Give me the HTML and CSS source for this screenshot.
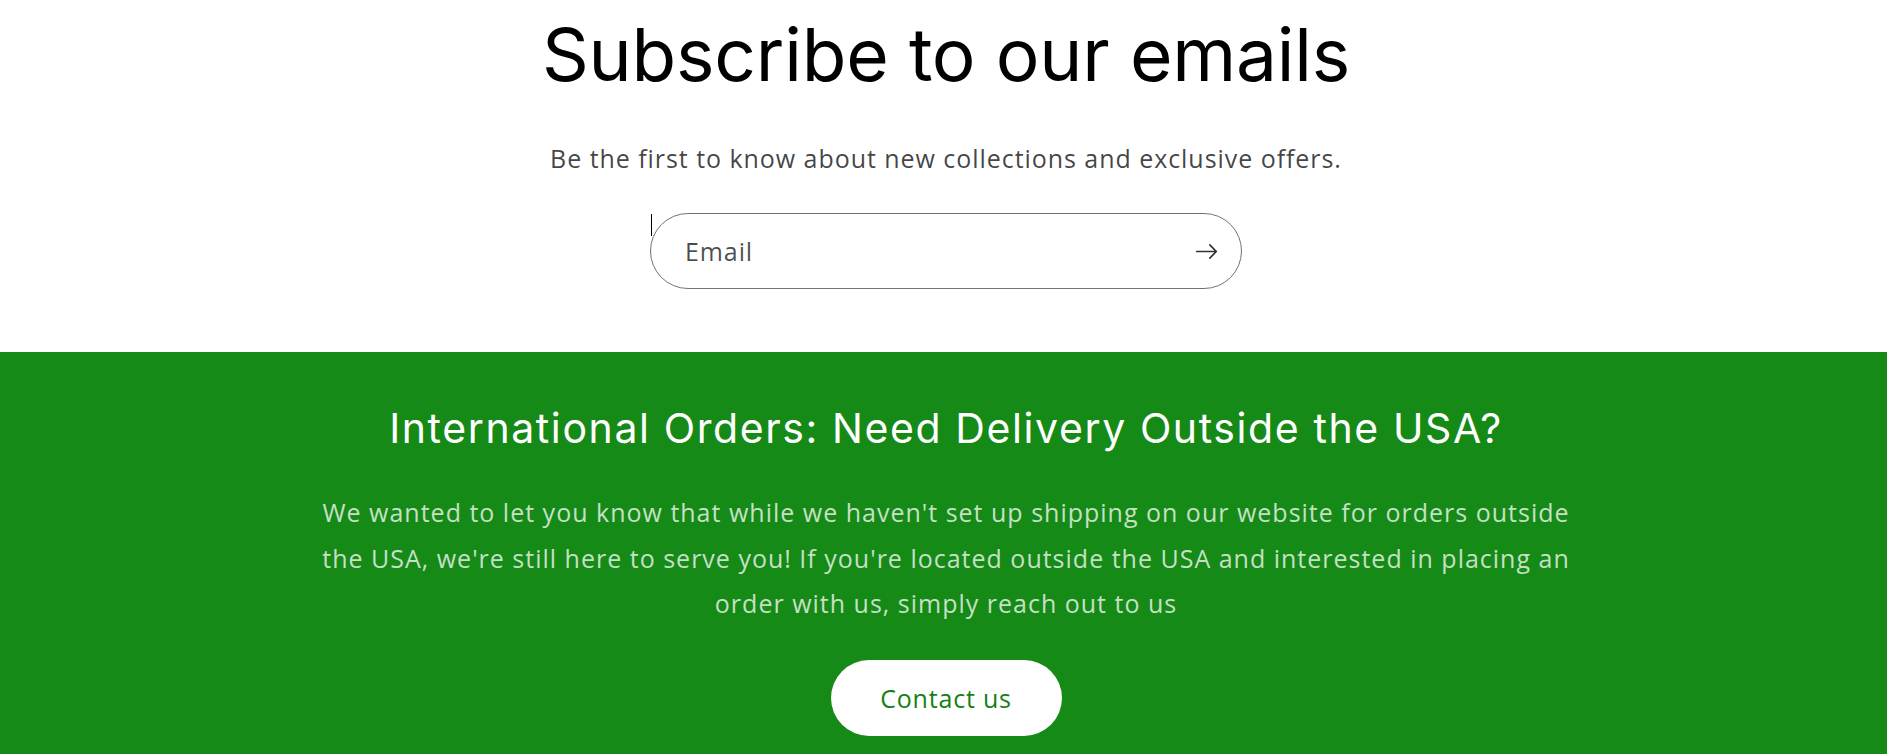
FILE: index.html
```html
<!DOCTYPE html>
<html>

<head>
    <title>Newsletter</title>
    <link rel="stylesheet" href="styles.css">
</head>

<body>
    <section class="newsletter">
        <h2 class="newsletter-heading">Subscribe to our emails</h2>
        <p class="newsletter-text">Be the first to know about new collections and exclusive offers.</p>
        <form class="newsletter-form" onsubmit="return false;">
            <div class="field">
                <input class="field-input" type="email" placeholder="Email">
                <button class="field-button" type="submit" aria-label="Subscribe">
                    <svg class="icon-arrow" viewBox="0 0 14 10" fill="none">
                        <path fill="currentColor" fill-rule="evenodd" clip-rule="evenodd" d="M8.537.808a.5.5 0 01.817-.162l4 4a.5.5 0 010 .708l-4 4a.5.5 0 11-.708-.708L11.793 5.5H1a.5.5 0 010-1h10.793L8.646 1.354a.5.5 0 01-.109-.546z"/>
                    </svg>
                </button>
            </div>
        </form>
    </section>

    <section class="intl">
        <h2 class="intl-heading">International Orders: Need Delivery Outside the USA?</h2>
        <p class="intl-text">We wanted to let you know that while we haven't set up shipping on our website for orders outside the USA, we're still here to serve you! If you're located outside the USA and interested in placing an order with us, simply reach out to us</p>
        <a class="intl-button" href="#">Contact us</a>
    </section>
</body>

</html>
```

FILE: styles.css
```css
body {
    margin: 0;
    font-family: "Open Sans", "Noto Sans", sans-serif;
    color: #121212;
    background: #fff;
}

.newsletter {
    display: flex;
    flex-direction: column;
    align-items: center;
    padding: 18px 0 63px 5px;
}

.newsletter-heading {
    margin: 0;
    font-family: Inter, Roboto, sans-serif;
    font-weight: 400;
    font-size: 73px;
    line-height: 73px;
    letter-spacing: -0.2px;
    color: #000;
}

.newsletter-text {
    margin: 51px 0 0;
    font-size: 25px;
    line-height: 32px;
    letter-spacing: 0.95px;
    color: rgba(18, 18, 18, 0.8);
}

.newsletter-form {
    margin-top: 39px;
}

/* email field with a caret mark left at its edge */
.field {
    position: relative;
    display: flex;
    align-items: center;
    width: 592px;
    height: 76px;
    box-sizing: border-box;
    border: 1px solid #727272;
    border-radius: 38px;
}

.field::before {
    content: "";
    position: absolute;
    left: 0;
    top: 0;
    width: 1px;
    height: 22px;
    background: #000;
}

.field-input {
    flex: 1;
    min-width: 0;
    border: none;
    outline: none;
    background: transparent;
    padding: 0 0 0 34px;
    font-family: "Open Sans", "Noto Sans", sans-serif;
    font-size: 25px;
    letter-spacing: 0.9px;
    color: #121212;
}

.field-input::placeholder {
    color: rgba(18, 18, 18, 0.75);
}

.field-button {
    display: flex;
    align-items: center;
    justify-content: flex-end;
    width: 70px;
    height: 100%;
    padding: 0 23px 0 0;
    border: none;
    background: transparent;
    color: #333;
    cursor: pointer;
}

.icon-arrow {
    width: 23px;
    height: 17px;
}

.intl {
    display: flex;
    flex-direction: column;
    align-items: center;
    padding: 50px 0 40px 5px;
    background: #168a17;
    text-align: center;
}

.intl-heading {
    margin: 0;
    font-family: Inter, Roboto, sans-serif;
    font-weight: 400;
    font-size: 41px;
    line-height: 52px;
    letter-spacing: 1.6px;
    color: #fff;
}

.intl-text {
    max-width: 1290px;
    margin: 36px 0 0;
    font-size: 25px;
    line-height: 45.5px;
    letter-spacing: 1px;
    color: rgba(255, 255, 255, 0.75);
}

.intl-button {
    display: flex;
    align-items: center;
    justify-content: center;
    width: 231px;
    height: 76px;
    margin-top: 33px;
    border-radius: 38px;
    background: #fff;
    color: #157f16;
    font-size: 25px;
    letter-spacing: 0.8px;
    text-decoration: none;
}
```
